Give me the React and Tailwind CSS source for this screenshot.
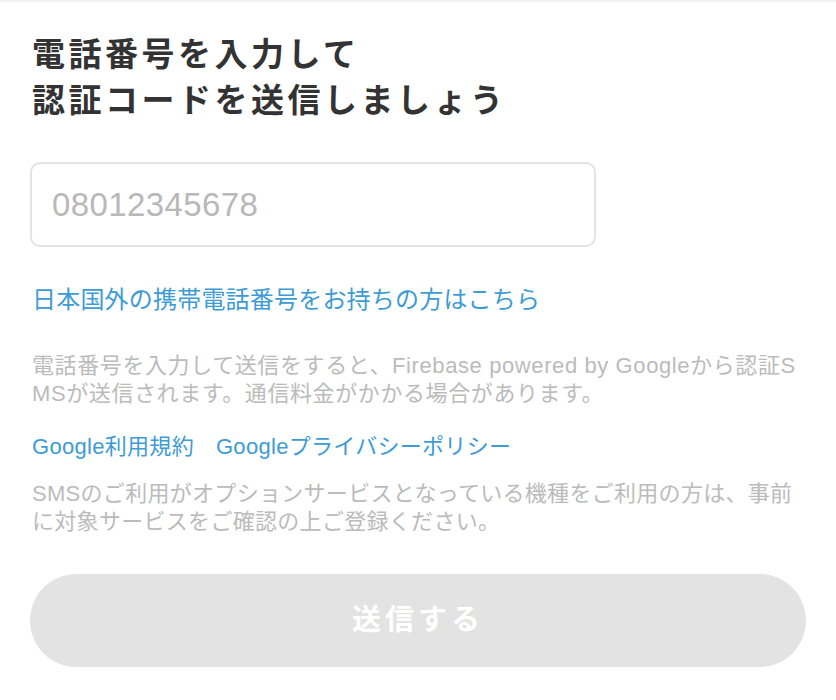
import React, { useState } from 'react';

const font = { fontFamily: '"Liberation Sans", "Noto Sans CJK JP", sans-serif' };

const App = () => {
  const [phone, setPhone] = useState('');

  return (
    <div
      className="min-h-[700px] w-[836px] bg-white border-t-2 border-[#f0f0f0] px-[30px] pt-[30px]"
      style={font}
    >
      <h1 className="pl-[2px] text-[33px] leading-[46px] font-bold tracking-[3.5px] text-[#333]">
        電話番号を入力して
        <br />
        認証コードを送信しましょう
      </h1>

      <input
        type="tel"
        placeholder="08012345678"
        value={phone}
        onChange={(e) => setPhone(e.target.value)}
        className="mt-[38px] block w-[566px] h-[85px] rounded-[10px] border-2 border-[#e3e3e3] px-[20px] text-[33px] tracking-[0.4px] text-[#333] placeholder:text-[#b8b8b8] focus:outline-none"
      />

      <p className="mt-[35px] pl-[2px] text-[24px] leading-[36px] tracking-[0.2px] text-[#3d9bd8]">
        日本国外の携帯電話番号をお持ちの方はこちら
      </p>

      <p className="mt-[34px] pl-[2px] text-[22px] leading-[28px] tracking-[0.6px] text-[#bbbbbb] whitespace-nowrap">
        電話番号を入力して送信をすると、Firebase powered by Googleから認証S
        <br />
        MSが送信されます。通信料金がかかる場合があります。
      </p>

      <div className="mt-[25px] pl-[2px] flex gap-[22px] text-[22px] leading-[28px] tracking-[0.3px] text-[#3d9bd8]">
        <span>Google利用規約</span>
        <span>Googleプライバシーポリシー</span>
      </div>

      <p className="mt-[19px] pl-[2px] text-[22px] leading-[28px] tracking-[0.3px] text-[#bbbbbb] whitespace-nowrap">
        SMSのご利用がオプションサービスとなっている機種をご利用の方は、事前
        <br />
        に対象サービスをご確認の上ご登録ください。
      </p>

      <button
        type="button"
        disabled
        className="mt-[38px] w-[776px] h-[93px] rounded-full bg-[#e3e3e3] text-white text-[29px] font-bold tracking-[4px]"
      >
        送信する
      </button>
    </div>
  );
};

export default App;
